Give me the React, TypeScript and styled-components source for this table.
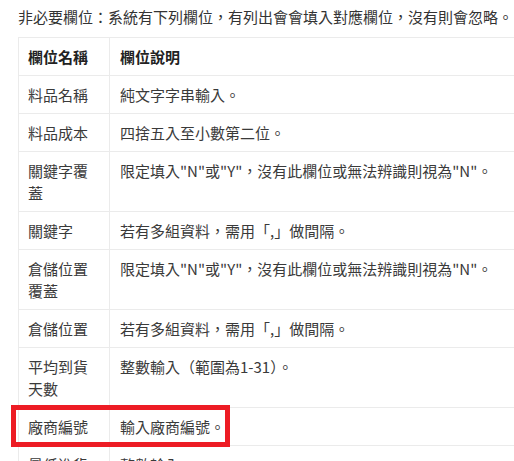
import React from "react";
import styled, { createGlobalStyle } from "styled-components";

const Global = createGlobalStyle`
  html, body {
    margin: 0;
    padding: 0;
    background: #ffffff;
    overflow: hidden;
  }
  body {
    font-family: "Noto Sans CJK TC", "Noto Sans", sans-serif;
    color: #333333;
  }
`;

const Page = styled.div`
  position: relative;
  padding: 6px 0 0 18px;
  width: 600px;
`;

const Intro = styled.p`
  margin: 0 0 9px 0;
  font-size: 15px;
  line-height: 22px;
  color: #333333;
  white-space: nowrap;
`;

const Table = styled.table`
  border-collapse: collapse;
  width: 560px;
  font-size: 15px;
  line-height: 22px;
`;

const HeadCell = styled.th<{ $first?: boolean }>`
  text-align: left;
  font-weight: 700;
  color: #222222;
  padding: 8px ${(p) => (p.$first ? "9px" : "10px")} 7px;
  border: 1px solid #ebebeb;
  width: ${(p) => (p.$first ? "72px" : "auto")};
  vertical-align: top;
`;

const Cell = styled.td<{ $first?: boolean }>`
  padding: 7.5px ${(p) => (p.$first ? "9px" : "10px")} 7.5px;
  border: 1px solid #ebebeb;
  color: #3a3a3a;
  vertical-align: top;
`;

const Highlight = styled.div`
  position: absolute;
  left: 11px;
  top: 405px;
  width: 219px;
  height: 42px;
  box-sizing: border-box;
  border: 5px solid #ed1c24;
  pointer-events: none;
`;

const rows: [string, string][] = [
  ["料品名稱", "純文字字串輸入。"],
  ["料品成本", "四捨五入至小數第二位。"],
  ["關鍵字覆蓋", "限定填入\"N\"或\"Y\"，沒有此欄位或無法辨識則視為\"N\"。"],
  ["關鍵字", "若有多組資料，需用「,」做間隔。"],
  ["倉儲位置覆蓋", "限定填入\"N\"或\"Y\"，沒有此欄位或無法辨識則視為\"N\"。"],
  ["倉儲位置", "若有多組資料，需用「,」做間隔。"],
  ["平均到貨天數", "整數輸入（範圍為1-31）。"],
  ["廠商編號", "輸入廠商編號。"],
  ["最低進貨", "整數輸入。"],
];

export default function App() {
  return (
    <>
      <Global />
      <Page>
        <Intro>非必要欄位：系統有下列欄位，有列出會會填入對應欄位，沒有則會忽略。</Intro>
        <Table>
          <thead>
            <tr>
              <HeadCell $first>欄位名稱</HeadCell>
              <HeadCell>欄位說明</HeadCell>
            </tr>
          </thead>
          <tbody>
            {rows.map(([name, desc]) => (
              <tr key={name + desc}>
                <Cell $first>{name}</Cell>
                <Cell>{desc}</Cell>
              </tr>
            ))}
          </tbody>
        </Table>
        <Highlight />
      </Page>
    </>
  );
}
